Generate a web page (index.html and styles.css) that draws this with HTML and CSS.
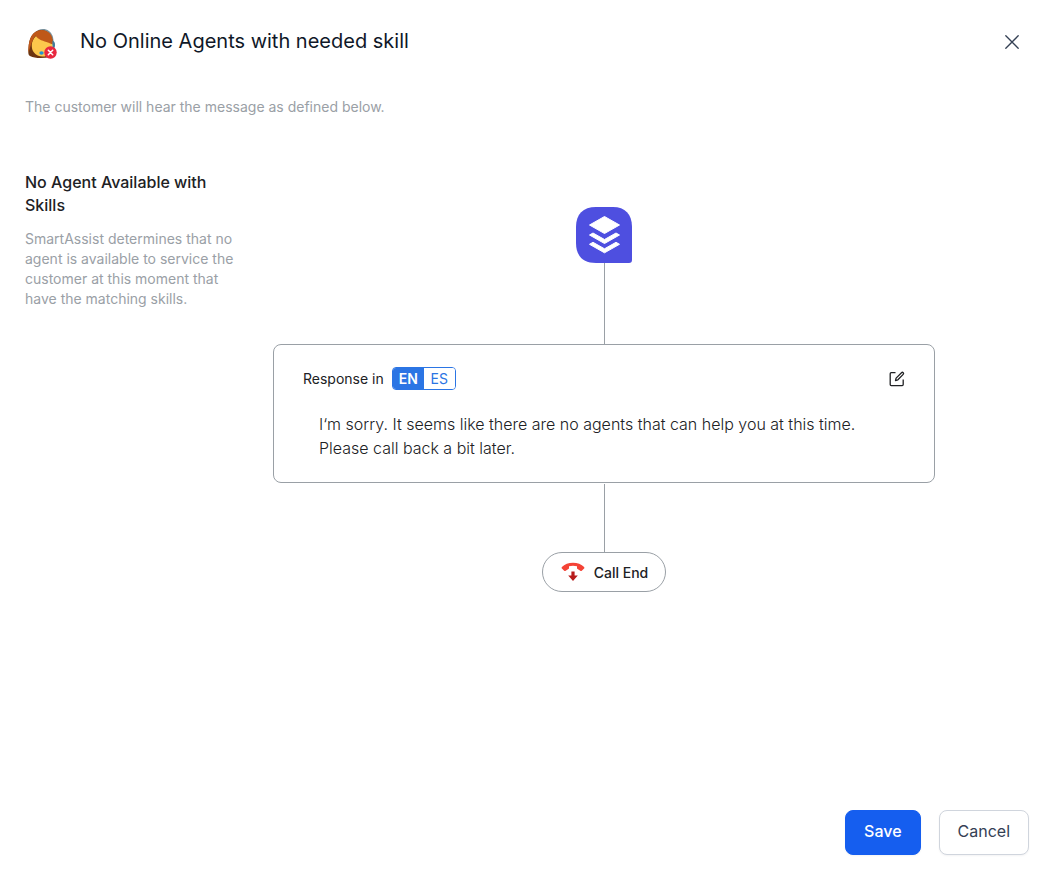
FILE: index.html
```html
<!DOCTYPE html>
<html lang="en">
<head>
<meta charset="utf-8">
<meta name="viewport" content="width=device-width, initial-scale=1">
<title>No Online Agents with needed skill</title>
<link rel="stylesheet" href="styles.css">
</head>
<body>
<div class="dialog">
  <header class="header">
    <svg class="avatar" viewBox="0 0 32 32" aria-hidden="true">
      <path d="M8 5C12-1 23-1 26 9l1 7-4 2z" fill="#78909c"/>
      <path d="M14 2C5 3 2 11 1.500 20c-.3 5-.5 7 2 8.300 4 2.200 13 2.200 20 .7l2-17C24 6 19 2 14 2z" fill="#6d3510"/>
      <path d="M9 8c-5.500 5-5 13-2 16.500 3.500 5 12 5.500 16 1C26.500 21 26.500 14 23 10z" fill="#fcc84c"/>
      <path d="M14 2C5 3 2 11 1.500 20c-.2 2-.2 3 0 4C3.500 20 4 14 8.500 7.500 11 12 17 13 21 14.500c1.500.8 3 1.500 4.500 1.500C27 7 21 1.500 14 2z" fill="#bf5819"/>
      <path d="M25.500 13q2.500 0 2.500 4t-2.500 3z" fill="#417b9a"/>
      <ellipse cx="14.500" cy="25" rx="2.200" ry="1.800" fill="#2295d3"/>
      <circle cx="23.500" cy="24.500" r="6.200" fill="#e8283f"/>
      <path d="M21.300 22.300l4.400 4.400m0-4.400l-4.400 4.400" stroke="#fff" stroke-width="1.500" stroke-linecap="round"/>
    </svg>
    <h1 class="title">No Online Agents with needed skill</h1>
    <button class="icon-button close" type="button" aria-label="Close">
      <svg width="14" height="14" viewBox="0 0 14 14" fill="none" stroke="#344054" stroke-width="1.300" stroke-linecap="round"><path d="M.8.8l12.400 12.400M13.200.8L.8 13.200"/></svg>
    </button>
  </header>
  <p class="intro">The customer will hear the message as defined below.</p>
  <main class="content">
    <section class="summary">
      <h2 class="summary-title">No Agent Available with Skills</h2>
      <p class="summary-text">SmartAssist determines that no agent is available to service the customer at this moment that have the matching skills.</p>
    </section>
    <section class="flow" aria-label="Call flow">
      <svg class="flow-logo" viewBox="0 0 56 56" aria-hidden="true">
        <path d="M20 0H37C49 0 56 7 56 20V53Q56 56 53 56H20C7 56 0 49 0 36V20C0 7 7 0 20 0z" fill="#4e4fe0"/>
        <g fill="#fff" stroke="#fff" stroke-width="1" stroke-linejoin="round">
          <path d="M28.500 9.500L43.500 18 28.500 26.500 13.500 18z"/>
          <path d="M13.500 28l3.500-2 11.500 6.500L40 26l3.500 2-15 8.500z"/>
          <path d="M13.500 37.300l3.500-2 11.500 6.500L40 35.300l3.500 2-15 8.500z"/>
        </g>
      </svg>
      <div class="connector"></div>
      <article class="card">
        <div class="card-head">
          <span class="card-label">Response in</span>
          <div class="languages" role="group" aria-label="Response language">
            <button class="language language-active" type="button" aria-pressed="true">EN</button>
            <button class="language" type="button" aria-pressed="false">ES</button>
          </div>
          <button class="icon-button edit" type="button" aria-label="Edit response">
            <svg width="16" height="16" viewBox="0 0 16 16" fill="none" stroke="#202124" stroke-width="1.300" stroke-linejoin="round"><path d="M6.500 1.700H2.200Q1.200 1.700 1.200 2.700V13.600Q1.200 14.600 2.200 14.600H13.200Q14.200 14.600 14.200 13.600V8.500"/><path d="M6.500 9.600l.6-2.500 5.400-5.400q.9-.8 1.700 0 .8.900 0 1.700L8.900 8.800z"/></svg>
          </button>
        </div>
        <p class="message">I‘m sorry. It seems like there are no agents that can help you at this time. Please call back a bit later.</p>
      </article>
      <div class="connector connector-end"></div>
      <div class="call-end">
        <svg width="24" height="20" viewBox="0 0 24 20" aria-hidden="true">
          <path d="M3.200 8.700L.9 6.600Q.3 5.900.9 5.100C6-.7 18-.7 23.100 5.100q.6.800 0 1.500L20.800 8.700q-.7.600-1.500.1L16.600 7.100Q16 6.700 16 5.900V4.300Q12 3 8 4.300V5.900Q8 6.700 7.400 7.100L4.700 8.800Q3.900 9.300 3.200 8.700z" fill="#f44336"/>
          <path d="M10.400 9.500h3.200v4h3.200L12 19l-4.800-5.500h3.200z" fill="#b71c1c"/>
        </svg>
        <span>Call End</span>
      </div>
    </section>
  </main>
  <footer class="footer">
    <button class="button button-primary" type="button">Save</button>
    <button class="button" type="button">Cancel</button>
  </footer>
</div>
</body>
</html>
```
FILE: styles.css
```css
* { box-sizing: border-box; }
body { margin: 0; background: #fff; color: #202124; font-family: Inter, "Liberation Sans", sans-serif; }
h1, h2, p { margin: 0; }
button { font: inherit; cursor: pointer; }
.dialog { display: flex; flex-direction: column; min-height: 100vh; padding: 24px 25px 23px; }
.header { display: flex; align-items: center; height: 35px; }
.avatar { width: 32px; height: 32px; margin: 5px 21px 0 2px; flex: none; }
.title { flex: 1; padding-bottom: 2px; font-size: 20px; line-height: 28px; font-weight: 400; color: #101828; }
.icon-button { display: flex; padding: 0; border: 0; background: none; }
.close { padding: 10px; }
.intro { margin-top: 38px; font-size: 14px; line-height: 20px; color: #9aa0a6; }
.content { display: grid; grid-template-columns: 212px minmax(0, 1fr); gap: 36px; margin-top: 54px; flex: 1; }
.summary-title { font-size: 16px; line-height: 23px; font-weight: 500; }
.summary-text { margin-top: 12px; font-size: 14px; line-height: 20px; color: #9aa0a6; }
.flow { display: flex; flex-direction: column; align-items: center; padding: 36px 94px 36px 0; }
.flow-logo { width: 56px; height: 56px; }
.connector { width: 1px; height: 81px; background: #9aa0a6; }
.connector-end { height: 68px; margin-top: 1px; }
.card { width: 100%; padding: 22px 29px; border: 1px solid #9aa0a6; border-radius: 8px; }
.card-head { display: flex; align-items: center; }
.card-label { font-size: 14px; line-height: 20px; }
.languages { display: flex; margin-left: 8px; border: 1px solid #2b75e4; border-radius: 4px; overflow: hidden; }
.language { width: 31px; padding: 0; border: 0; background: #fff; color: #2b75e4; font-size: 14px; line-height: 21px; }
.language-active { background: #2b75e4; color: #fff; font-weight: 600; }
.edit { margin-left: auto; }
.message { margin-top: 22px; padding: 0 16px; font-size: 16px; line-height: 24px; font-weight: 300; }
.call-end { display: flex; align-items: center; gap: 9px; height: 40px; padding: 0 17px 0 18px; border: 1px solid #9aa0a6; border-radius: 20px; font-size: 14px; font-weight: 500; white-space: nowrap; }
.footer { display: flex; justify-content: flex-end; gap: 18px; }
.button { height: 45px; padding: 0 18px 3px; border: 1px solid #d0d5dd; border-radius: 8px; background: #fff; color: #344054; font-size: 16px; line-height: 24px; box-shadow: 0 1px 2px rgba(16, 24, 40, 0.05); }
.button-primary { border-color: #155eef; background: #155eef; color: #fff; font-weight: 500; }
```
